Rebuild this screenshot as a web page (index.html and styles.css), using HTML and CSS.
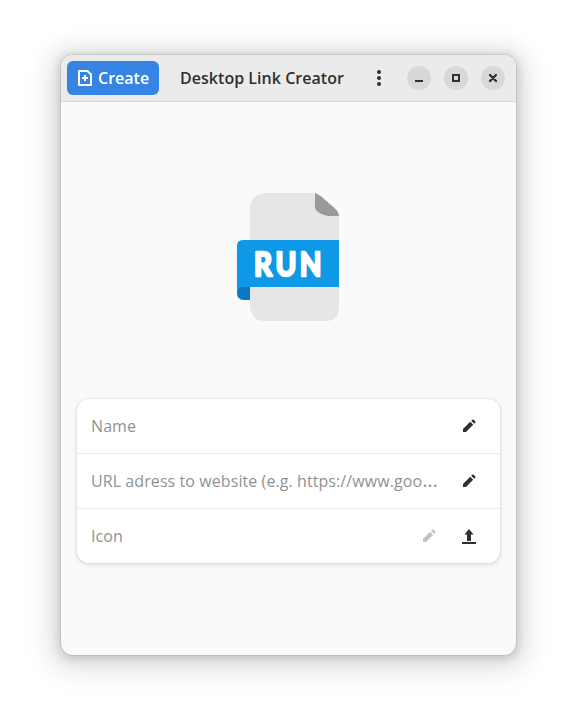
FILE: index.html
```html
<!DOCTYPE html>
<html lang="en">
<head>
<meta charset="utf-8">
<title>Desktop Link Creator</title>
<link rel="stylesheet" href="styles.css">
</head>
<body>
<main class="window">
  <header class="headerbar">
    <button class="create">
      <svg width="16" height="16" viewBox="0 0 16 16"><path d="M2 1h8.500L14 4.500V15H2z" fill="none" stroke="currentColor" stroke-width="2" stroke-linejoin="round"/><path d="M8 5v6M5 8h6" stroke="currentColor" stroke-width="2"/></svg>
      <span class="create-label">Create</span>
    </button>
    <h1 class="title">Desktop Link Creator</h1>
    <button class="menu" aria-label="Menu"><svg width="16" height="16" viewBox="0 0 16 16" fill="currentColor"><circle cx="8" cy="2" r="2"/><circle cx="8" cy="8" r="2"/><circle cx="8" cy="14" r="2"/></svg></button>
    <div class="controls">
      <button class="control" aria-label="Minimize"><svg width="16" height="16" viewBox="0 0 16 16"><path d="M4 11h8" stroke="currentColor" stroke-width="2"/></svg></button>
      <button class="control" aria-label="Maximize"><svg width="16" height="16" viewBox="0 0 16 16"><path d="M5 5h6v6H5z" fill="none" stroke="currentColor" stroke-width="2"/></svg></button>
      <button class="control" aria-label="Close"><svg width="16" height="16" viewBox="0 0 16 16"><path d="m5 5 6 6m0-6-6 6" stroke="currentColor" stroke-width="2.300" stroke-linecap="round"/></svg></button>
    </div>
  </header>
  <div class="preview">
    <svg width="102" height="128" viewBox="0 0 102 128">
      <path d="M29 0h49l24 23v91q0 14-14 14H27q-12 0-14-14V15Q14 1 29 0z" fill="#e6e6e8"/>
      <path d="M78 0c6 2 11 8 16 12 4 3 8 7 8 11H91Q79 20 78 15z" fill="#999"/>
      <path d="M6 47h96v47H6l-6 6V53q0-6 6-6z" fill="#0f98e6"/>
      <path d="M0 100q1-6 6-6h7v13H7q-7 0-7-7z" fill="#0b78c4"/>
      <g transform="scale(.88 1)"><text class="run" x="19.300" y="83">RUN</text></g>
    </svg>
  </div>
  <div class="list">
    <div class="row">
      <span class="label">Name</span>
      <svg class="icon" width="16" height="16" viewBox="0 0 16 16" fill="currentColor"><path d="M2 14v-3l7.200-7.200 3 3L5 14zM10.200 2.800l1-1q.8-.8 1.600 0l1.400 1.400q.8.8 0 1.600l-1 1z"/></svg>
    </div>
    <div class="row">
      <span class="label">URL adress to website (e.g. https://www.goo<span class="ellipsis">…</span></span>
      <svg class="icon" width="16" height="16" viewBox="0 0 16 16" fill="currentColor"><path d="M2 14v-3l7.200-7.200 3 3L5 14zM10.200 2.800l1-1q.8-.8 1.600 0l1.400 1.400q.8.8 0 1.600l-1 1z"/></svg>
    </div>
    <div class="row">
      <span class="label">Icon</span>
      <svg class="icon dim" width="16" height="16" viewBox="0 0 16 16" fill="currentColor"><path d="M2 14v-3l7.200-7.200 3 3L5 14zM10.200 2.800l1-1q.8-.8 1.600 0l1.400 1.400q.8.8 0 1.600l-1 1z"/></svg>
      <svg class="icon" width="16" height="16" viewBox="0 0 16 16" fill="currentColor"><path d="M8 1 3.500 6.500H6V13h4V6.500h2.500zM1 14h14v2H1z"/></svg>
    </div>
  </div>
</main>
</body>
</html>
```
FILE: styles.css
```css
* { box-sizing: border-box; }
body {
  margin: 0;
  min-height: 722px;
  padding: 55px 61px 0;
  background: #fff;
  color: #2f2f2f;
  font-family: "Open Sans", "Noto Sans", sans-serif;
}
.window {
  width: 455px;
  height: 600px;
  border-radius: 12px;
  background: #fafafa;
  overflow: hidden;
  box-shadow: 0 0 0 1px rgba(0,0,0,.07), 0 2px 8px 2px rgba(0,0,0,.13), 0 3px 20px 10px rgba(0,0,0,.09), 0 6px 32px 16px rgba(0,0,0,.04);
}
.headerbar {
  display: flex;
  align-items: center;
  height: 47px;
  padding: 0 11px 0 6px;
  background: #ebebeb;
  border-bottom: 1px solid #d8d8d8;
}
button {
  display: flex;
  align-items: center;
  justify-content: center;
  padding: 0;
  border: 0;
  background: none;
  color: inherit;
  font: inherit;
}
svg { display: block; flex: none; }
.create {
  justify-content: flex-start;
  width: 92px;
  height: 34px;
  padding-left: 10px;
  gap: 5px;
  border-radius: 6px;
  background: #3584e4;
  color: #fff;
}
.create-label, .title {
  font-size: 16px;
  font-weight: 600;
  line-height: 22px;
  white-space: nowrap;
}
.title {
  width: 165px;
  margin: 0 0 0 21px;
  letter-spacing: .03px;
}
.menu { margin-left: 26px; }
.controls {
  display: flex;
  gap: 13px;
  margin-left: auto;
}
.control {
  width: 24px;
  height: 24px;
  border-radius: 50%;
  background: #d8d8d8;
}
.preview {
  display: flex;
  justify-content: center;
  height: 297px;
  padding: 91px 1px 0 0;
}
.run {
  fill: #fff;
  stroke: #fff;
  stroke-width: 2.500px;
  stroke-linejoin: round;
  font: 700 32px Lato, sans-serif;
  letter-spacing: 4px;
}
.list {
  width: 423px;
  margin: 0 16px;
  border-radius: 12px;
  background: #fff;
  box-shadow: 0 0 0 1px rgba(0,0,0,.03), 0 1px 3px 1px rgba(0,0,0,.07), 0 2px 6px 2px rgba(0,0,0,.03);
}
.row {
  display: flex;
  align-items: center;
  height: 55px;
  padding: 0 23px 0 14px;
  border-bottom: 1px solid #ebebeb;
}
.row:last-child { height: 54px; border-bottom: 0; }
.label {
  flex: 1;
  color: #929292;
  font-size: 16px;
  line-height: 22px;
  letter-spacing: .08px;
  white-space: nowrap;
}
.ellipsis {
  font-size: 20px;
  line-height: 0;
}
.icon + .icon { margin-left: 24px; }
.dim { color: #c1c1c1; }
```
